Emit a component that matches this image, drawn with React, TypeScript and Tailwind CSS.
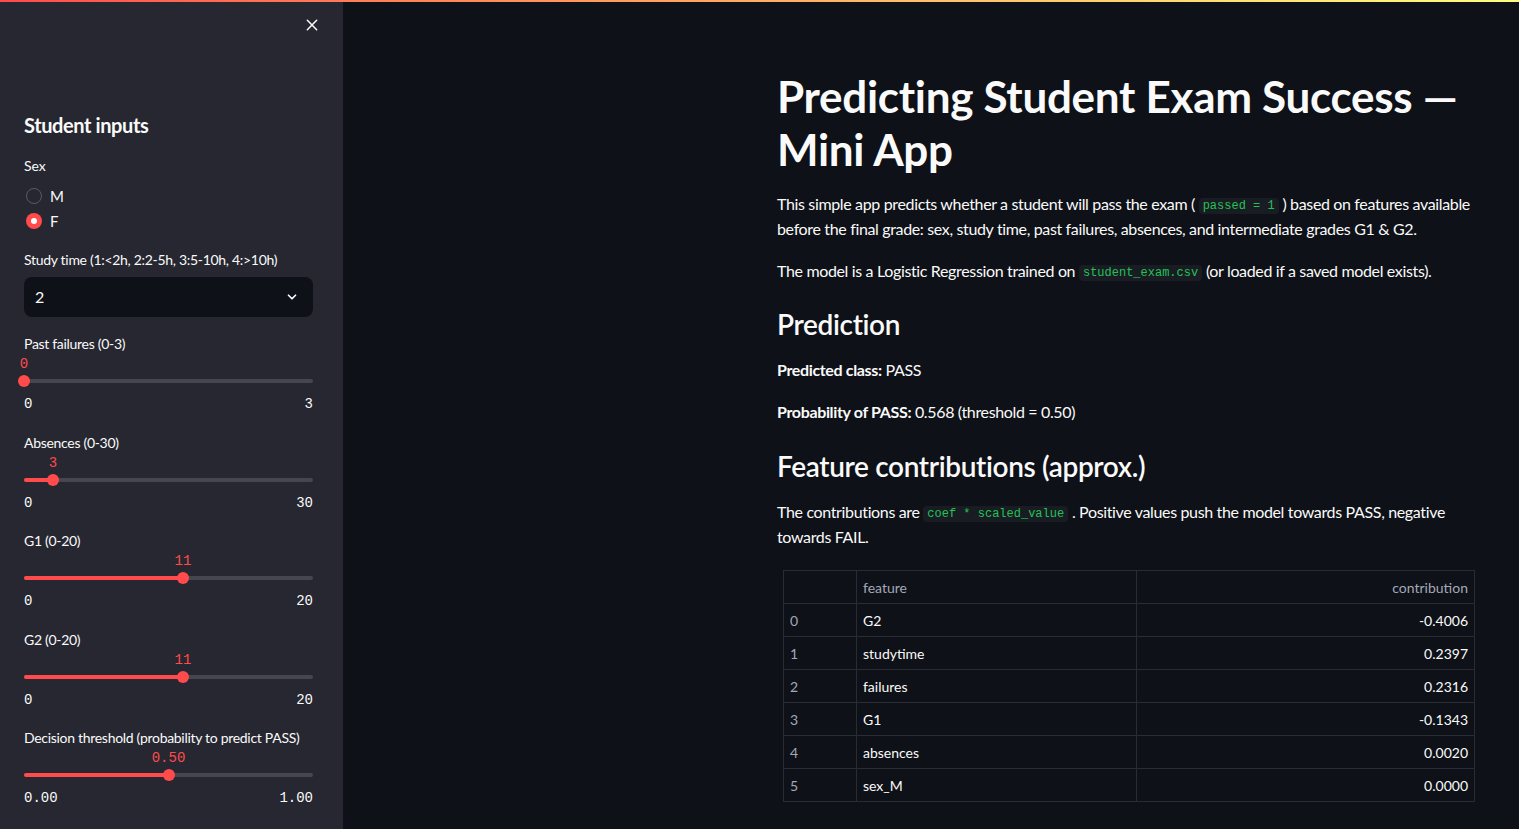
import React from "react";

const sans = "font-['Lato','Noto_Sans',sans-serif]";
const mono = "font-['Liberation_Mono','DejaVu_Sans_Mono',monospace]";

const sliders = [
  { label: "Past failures (0-3)", value: "0", min: "0", max: "3", frac: 0 },
  { label: "Absences (0-30)", value: "3", min: "0", max: "30", frac: 3 / 30 },
  { label: "G1 (0-20)", value: "11", min: "0", max: "20", frac: 11 / 20 },
  { label: "G2 (0-20)", value: "11", min: "0", max: "20", frac: 11 / 20 },
  {
    label: "Decision threshold (probability to predict PASS)",
    value: "0.50",
    min: "0.00",
    max: "1.00",
    frac: 0.5,
  },
];

const rows = [
  ["0", "G2", "-0.4006"],
  ["1", "studytime", "0.2397"],
  ["2", "failures", "0.2316"],
  ["3", "G1", "-0.1343"],
  ["4", "absences", "0.0020"],
  ["5", "sex_M", "0.0000"],
];

function Slider({ s }: { s: (typeof sliders)[number] }) {
  const pct = `${s.frac * 100}%`;
  return (
    <div className="h-[98.5px]">
      <div className="text-[14px] leading-[20px] tracking-[-0.3px] text-[#fafafa]">{s.label}</div>
      <div className="relative mt-[2px] h-[35px]">
        <div
          className={`absolute top-0 -translate-x-1/2 text-[14px] leading-[16px] text-[#ff4b4b] ${mono}`}
          style={{ left: pct }}
        >
          {s.value}
        </div>
        <div className="absolute left-0 right-0 top-[23px] h-[4px] rounded-full bg-[#45464f]" />
        <div
          className="absolute left-0 top-[23px] h-[4px] rounded-full bg-[#ff4b4b]"
          style={{ width: pct }}
        />
        <div
          className="absolute top-[19px] h-[12px] w-[12px] -translate-x-1/2 rounded-full bg-[#ff4b4b]"
          style={{ left: pct }}
        />
      </div>
      <div className={`mt-[5px] flex justify-between text-[14px] leading-[16px] text-[#fafafa] ${mono}`}>
        <span>{s.min}</span>
        <span>{s.max}</span>
      </div>
    </div>
  );
}

function Code({ children }: { children: React.ReactNode }) {
  return (
    <code
      className={`rounded-[4px] bg-[#1a1c24] px-[4px] py-[1px] align-[1px] text-[12px] leading-none tracking-normal text-[#21c354] ${mono}`}
    >
      {children}
    </code>
  );
}

export default function App() {
  return (
    <div className={`relative flex h-[829px] w-full overflow-hidden bg-[#0e1117] text-[#fafafa] ${sans}`}>
      <div className="absolute left-0 right-0 top-0 h-[2px] bg-gradient-to-r from-[#ff4b4b] to-[#fffd80]" />

      {/* Sidebar */}
      <aside className="flex w-[343px] shrink-0 flex-col bg-[#262730] pl-[24px] pr-[30px]">
        <div className="flex h-[32px] items-end justify-end">
          <svg width="14" height="14" viewBox="0 0 24 24" className="mr-[-6px]" fill="none" stroke="#fafafa" strokeWidth="2.6" strokeLinecap="round">
            <path d="M4 4l16 16M20 4L4 20" />
          </svg>
        </div>
        <h2 className="mt-[78px] text-[20px] font-bold leading-[30px] tracking-[-0.4px]">Student inputs</h2>
        <div className="mt-[16px] text-[14px] leading-[20px]">Sex</div>
        <div className="mt-[9px] flex flex-col gap-[3px] text-[15px]">
          <label className="flex h-[22px] items-center gap-[8px] pl-[2px]">
            <span className="h-[16px] w-[16px] rounded-full border border-[#5a5b64]" />
            <span>M</span>
          </label>
          <label className="flex h-[22px] items-center gap-[8px] pl-[2px]">
            <span className="flex h-[16px] w-[16px] items-center justify-center rounded-full bg-[#ff4b4b]">
              <span className="h-[6px] w-[6px] rounded-full bg-white" />
            </span>
            <span>F</span>
          </label>
        </div>
        <div className="mt-[18px] text-[14px] leading-[20px] tracking-[-0.3px]">Study time (1:&lt;2h, 2:2-5h, 3:5-10h, 4:&gt;10h)</div>
        <div className="mt-[7px] flex h-[40px] items-center justify-between rounded-[8px] bg-[#0e1117] pl-[11px] pr-[14px] text-[16px]">
          <span>2</span>
          <svg width="14" height="14" viewBox="0 0 24 24" fill="none" stroke="#fafafa" strokeWidth="3" strokeLinecap="round" strokeLinejoin="round">
            <path d="M6 9l6 6 6-6" />
          </svg>
        </div>
        <div className="mt-[17px]">
          {sliders.map((s) => (
            <Slider key={s.label} s={s} />
          ))}
        </div>
      </aside>

      {/* Main */}
      <main className="flex-1">
        <div className="ml-[434px] w-[700px] pt-[70px] tracking-[-0.35px]">
          <h1 className="text-[44px] font-bold leading-[53px] tracking-[-0.3px]">
            Predicting Student Exam Success — Mini App
          </h1>
          <p className="mt-[15px] text-[16px] leading-[25px]">
            This simple app predicts whether a student will pass the exam ( <Code>passed = 1</Code> ) based on features available before the final grade: sex, study time, past failures, absences, and intermediate grades G1 &amp; G2.
          </p>
          <p className="mt-[17px] text-[16px] leading-[25px]">
            The model is a Logistic Regression trained on <Code>student_exam.csv</Code> (or loaded if a saved model exists).
          </p>
          <h2 className="mt-[23px] text-[28px] font-semibold leading-[36px]">Prediction</h2>
          <p className="mt-[15px] text-[16px] leading-[25px]">
            <b>Predicted class:</b> PASS
          </p>
          <p className="mt-[17px] text-[16px] leading-[25px]">
            <b>Probability of PASS:</b> 0.568 (threshold = 0.50)
          </p>
          <h2 className="mt-[24px] text-[28px] font-semibold leading-[36px]">Feature contributions (approx.)</h2>
          <p className="mt-[15px] text-[16px] leading-[25px]">
            The contributions are <Code>coef * scaled_value</Code> . Positive values push the model towards PASS, negative towards FAIL.
          </p>
          <table className="ml-[6px] mt-[21px] w-[692px] border-collapse text-[14px] tracking-normal">
            <thead>
              <tr className="h-[33px]">
                <th className="w-[73px] border border-[#2a2c35]" />
                <th className="w-[280px] border border-[#2a2c35] px-[6px] text-left font-normal text-[#a3a8b8]">feature</th>
                <th className="border border-[#2a2c35] px-[6px] text-right font-normal text-[#a3a8b8]">contribution</th>
              </tr>
            </thead>
            <tbody>
              {rows.map((r) => (
                <tr key={r[0]} className="h-[33px]">
                  <td className="border border-[#2a2c35] px-[6px] text-[#a3a8b8]">{r[0]}</td>
                  <td className="border border-[#2a2c35] px-[6px]">{r[1]}</td>
                  <td className="border border-[#2a2c35] px-[6px] text-right">{r[2]}</td>
                </tr>
              ))}
            </tbody>
          </table>
        </div>
      </main>
    </div>
  );
}
